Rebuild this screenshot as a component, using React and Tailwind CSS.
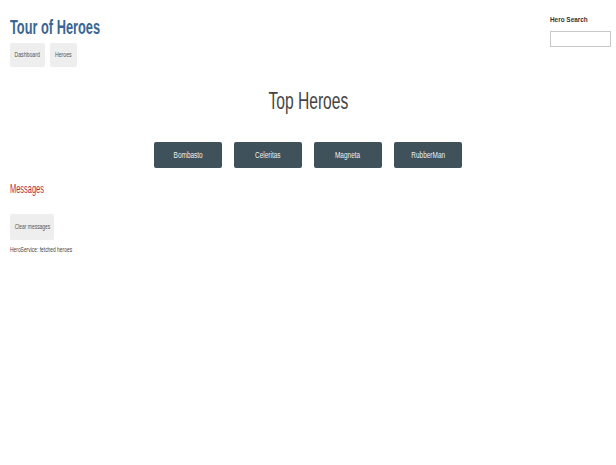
import React from 'react';

// squashed text: the reference renders everything horizontally condensed
const Sx = ({ children, className = '' }) => (
  <span className={`inline-block whitespace-nowrap ${className}`}>{children}</span>
);

const heroes = ['Bombasto', 'Celeritas', 'Magneta', 'RubberMan'];

export default function App() {
  return (
    <div className="min-h-[465px] bg-white px-[10px] pt-[15px] font-['Liberation_Sans',Arial,sans-serif]">
      {/* Header */}
      <div className="-mr-[5px] flex justify-between">
        <div>
          <h1 className="h-[24px] text-[20px] font-bold leading-[24px] text-[#386796]">
            <Sx className="origin-left scale-x-[0.64]">Tour of Heroes</Sx>
          </h1>
          <nav className="mt-[4px] flex gap-[5px]">
            <a className="flex h-[24px] w-[35px] items-center justify-center rounded-[2px] bg-[#eeeeee] text-[7px] text-[#555]">
              <Sx className="scale-x-[0.74]">Dashboard</Sx>
            </a>
            <a className="flex h-[24px] w-[27px] items-center justify-center rounded-[2px] bg-[#eeeeee] text-[7px] text-[#555]">
              <Sx className="scale-x-[0.74]">Heroes</Sx>
            </a>
          </nav>
        </div>
        <div className="w-[61px]">
          <div className="h-[10px] text-[8px] font-bold leading-[10px] text-[#333]">
            <Sx className="origin-left scale-x-[0.8]">Hero Search</Sx>
          </div>
          <input className="mt-[6px] block h-[16px] w-[61px] border border-[#c8c8c8] bg-white" />
        </div>
      </div>

      {/* Top heroes */}
      <h2 className="mt-[20px] text-center text-[24px] leading-[28px] text-[#444]">
        <Sx className="scale-x-[0.65]">Top Heroes</Sx>
      </h2>
      <div className="mt-[27px] flex justify-center gap-[12px]">
        {heroes.map((h) => (
          <a
            key={h}
            className="flex h-[26px] w-[68px] items-center justify-center rounded-[2px] bg-[#3f525c] text-[8.5px] text-[#eee]"
          >
            <Sx className="scale-x-[0.76]">{h}</Sx>
          </a>
        ))}
      </div>

      {/* Messages */}
      <h2 className="mt-[14px] text-[12px] leading-[14px] text-[#b02a3e]">
        <Sx className="origin-left scale-x-[0.62]">Messages</Sx>
      </h2>
      <button className="mt-[18px] flex h-[26px] w-[44px] items-center justify-center rounded-[2px] bg-[#eeeeee] text-[6.5px] text-[#555]">
        <Sx className="scale-x-[0.76]">Clear messages</Sx>
      </button>
      <div className="mt-[5px] h-[9px] text-[7px] leading-[9px] text-[#444]">
        <Sx className="origin-left scale-x-[0.7]">HeroService: fetched heroes</Sx>
      </div>
    </div>
  );
}
